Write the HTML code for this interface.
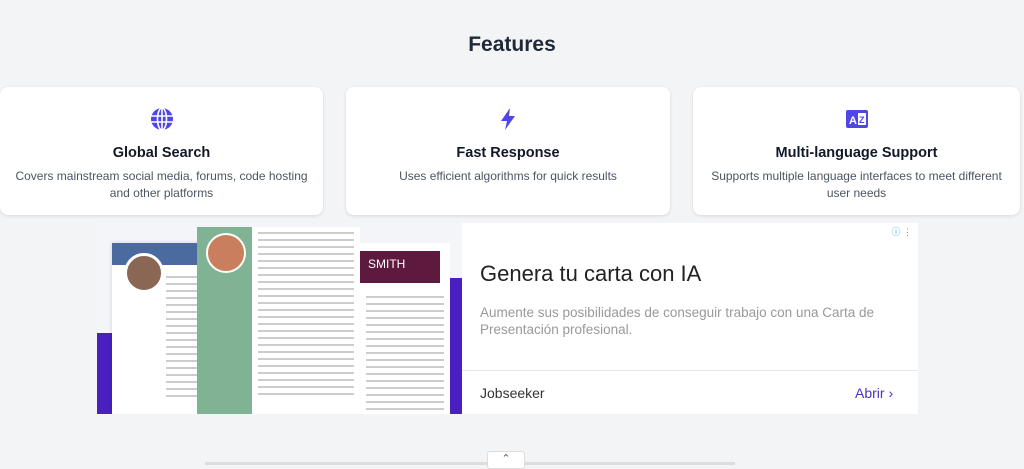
<!DOCTYPE html>
<html><head><style>
body{margin:0;width:1024px;height:465px;background:#f3f4f6;font-family:"Liberation Sans",sans-serif;position:relative;overflow:hidden}
h1{position:absolute;top:33px;left:0;width:1024px;text-align:center;margin:0;font-size:21px;color:#1f2937;font-weight:bold}
.card{position:absolute;top:87px;height:128px;background:#fff;border-radius:8px;box-shadow:0 1px 3px rgba(0,0,0,.12);text-align:center}
.card .t{position:absolute;top:58px;left:0;right:0;font-size:14.5px;font-weight:bold;color:#111827}
.card .d{position:absolute;top:81px;left:10px;right:10px;font-size:12px;line-height:17px;color:#4b5563}
.ic{position:absolute;top:20px;left:50%;margin-left:-12px}
.ad{position:absolute;left:97px;top:223px;width:821px;height:191px;background:#fff}
.img{position:absolute;left:0;top:0;width:365px;height:191px;background:#f4f5f8;overflow:hidden}
.ln{height:2px;background:#ccc;margin:5px 6px}
</style></head><body>
<h1>Features</h1>
<div class="card" style="left:0;width:323px">
<svg class="ic" width="24" height="24" viewBox="0 0 24 24"><circle cx="12" cy="12" r="11" fill="#4f46e5"/><g stroke="#fff" stroke-width="1.6" fill="none"><ellipse cx="12" cy="12" rx="4.5" ry="11"/><line x1="1" y1="9" x2="23" y2="9"/><line x1="1" y1="15" x2="23" y2="15"/><line x1="12" y1="1" x2="12" y2="23"/></g></svg>
<div class="t">Global Search</div><div class="d">Covers mainstream social media, forums, code hosting and other platforms</div></div>
<div class="card" style="left:346px;width:324px">
<svg class="ic" width="24" height="24" viewBox="0 0 24 24"><path d="M14 1 L5 14 H11 L9 23 L19 9 H13 Z" fill="#4f46e5"/></svg>
<div class="t">Fast Response</div><div class="d">Uses efficient algorithms for quick results</div></div>
<div class="card" style="left:693px;width:327px">
<svg class="ic" width="24" height="24" viewBox="0 0 24 24"><rect x="1" y="3" width="22" height="18" rx="2" fill="#4f46e5"/><text x="4" y="17" font-size="11" font-weight="bold" fill="#fff" font-family="Liberation Sans">A</text><rect x="13" y="6" width="8" height="12" fill="#fff"/><text x="14" y="16" font-size="9" font-weight="bold" fill="#4f46e5" font-family="Liberation Sans">Z</text></svg>
<div class="t">Multi-language Support</div><div class="d">Supports multiple language interfaces to meet different user needs</div></div>
<div class="ad">
<div class="img">
<div style="position:absolute;left:0;top:110px;width:15px;height:81px;background:#4a1fc0"></div>
<div style="position:absolute;left:352px;top:55px;width:13px;height:136px;background:#4a1fc0"></div>
<div style="position:absolute;left:15px;top:20px;width:95px;height:171px;background:#fff;box-shadow:0 0 4px rgba(0,0,0,.15)"><div style="height:22px;background:#4a6aa0"></div><div style="position:absolute;left:12px;top:10px;width:34px;height:34px;border-radius:50%;background:#8a6655;border:3px solid #fff"></div><div style="position:absolute;left:48px;top:28px;width:45px"><div class="ln"></div><div class="ln"></div><div class="ln"></div><div class="ln"></div><div class="ln"></div><div class="ln"></div><div class="ln"></div><div class="ln"></div><div class="ln"></div><div class="ln"></div><div class="ln"></div><div class="ln"></div><div class="ln"></div><div class="ln"></div><div class="ln"></div><div class="ln"></div><div class="ln"></div><div class="ln"></div></div></div>
<div style="position:absolute;left:100px;top:4px;width:55px;height:187px;background:#7fb393"><div style="position:absolute;left:9px;top:6px;width:36px;height:36px;border-radius:50%;background:#c97f5e;border:2px solid #fff"></div></div>
<div style="position:absolute;left:155px;top:4px;width:108px;height:187px;background:#fff"><div class="ln"></div><div class="ln"></div><div class="ln"></div><div class="ln"></div><div class="ln"></div><div class="ln"></div><div class="ln"></div><div class="ln"></div><div class="ln"></div><div class="ln"></div><div class="ln"></div><div class="ln"></div><div class="ln"></div><div class="ln"></div><div class="ln"></div><div class="ln"></div><div class="ln"></div><div class="ln"></div><div class="ln"></div><div class="ln"></div><div class="ln"></div><div class="ln"></div><div class="ln"></div><div class="ln"></div></div>
<div style="position:absolute;left:263px;top:20px;width:90px;height:171px;background:#fff"><div style="position:absolute;left:0;top:8px;width:80px;height:32px;background:#5e1a3e;color:#fff;font-size:12px;padding:6px 0 0 8px;box-sizing:border-box">SMITH</div><div style="position:absolute;top:48px;left:0;width:90px"><div class="ln"></div><div class="ln"></div><div class="ln"></div><div class="ln"></div><div class="ln"></div><div class="ln"></div><div class="ln"></div><div class="ln"></div><div class="ln"></div><div class="ln"></div><div class="ln"></div><div class="ln"></div><div class="ln"></div><div class="ln"></div><div class="ln"></div><div class="ln"></div><div class="ln"></div></div></div>
</div>
<div style="position:absolute;left:383px;top:38px;font-size:22px;color:#222">Genera tu carta con IA</div>
<div style="position:absolute;left:383px;top:81px;width:440px;font-size:13.5px;line-height:17px;color:#999">Aumente sus posibilidades de conseguir trabajo con una Carta de Presentación profesional.</div>
<div style="position:absolute;left:365px;right:0;top:147px;border-top:1px solid #e8e8e8"></div>
<div style="position:absolute;left:383px;top:162px;font-size:14px;color:#333">Jobseeker</div>
<div style="position:absolute;left:758px;top:162px;font-size:14px;color:#4b2fc8">Abrir &#x203A;</div>
<div style="position:absolute;right:6px;top:2px;font-size:9px;color:#2aa3e6">ⓘ ⋮</div>
</div>
<div style="position:absolute;left:205px;top:462px;width:530px;height:3px;background:#ddd"></div>
<div style="position:absolute;left:487px;top:451px;width:36px;height:16px;background:#fff;border:1px solid #ddd;border-radius:3px;text-align:center;font-size:11px;color:#555">&#x2303;</div>
</body></html>
